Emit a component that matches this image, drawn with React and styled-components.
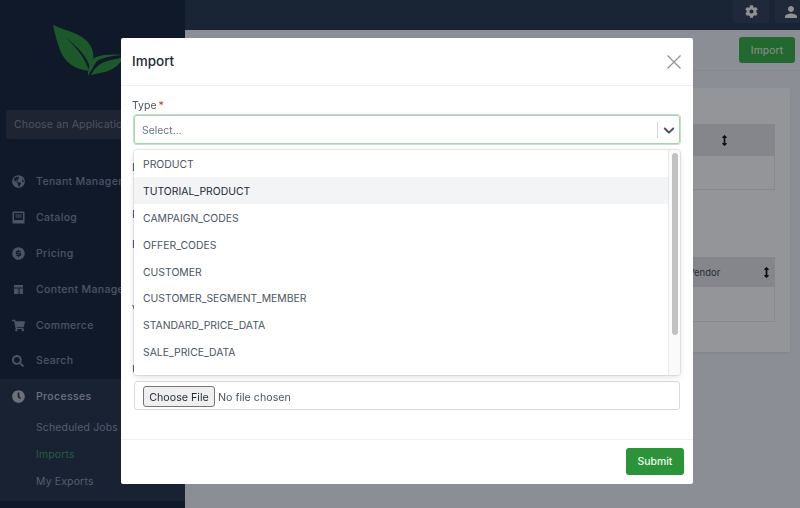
import React from "react";
import styled, { createGlobalStyle } from "styled-components";
import { FaGlobeAmericas, FaShoppingCart, FaSearch, FaClock, FaCog, FaArrowsAltV } from "react-icons/fa";
import { RiMoneyDollarCircleFill } from "react-icons/ri";
import { MdPerson } from "react-icons/md";

const GlobalStyle = createGlobalStyle`
  html, body {
    margin: 0;
    height: 100%;
    overflow: hidden;
    font-family: Inter, "Liberation Sans", sans-serif;
  }
  * { box-sizing: border-box; }
`;

const navItems = [
  { label: "Tenant Management", icon: <FaGlobeAmericas size={13} /> },
  { label: "Catalog", icon: <CatalogIcon /> },
  { label: "Pricing", icon: <RiMoneyDollarCircleFill size={15} /> },
  { label: "Content Management", icon: <ContentIcon /> },
  { label: "Commerce", icon: <FaShoppingCart size={13} /> },
  { label: "Search", icon: <FaSearch size={12} /> },
];

const importTypes = [
  "PRODUCT",
  "TUTORIAL_PRODUCT",
  "CAMPAIGN_CODES",
  "OFFER_CODES",
  "CUSTOMER",
  "CUSTOMER_SEGMENT_MEMBER",
  "STANDARD_PRICE_DATA",
  "SALE_PRICE_DATA",
];

function CatalogIcon() {
  return (
    <svg width="13" height="13" viewBox="0 0 13 13" fill="currentColor">
      <path d="M1 0.5h11a.5.5 0 0 1 .5.5v11.5H.5V1A.5.5 0 0 1 1 .5zM2 2v7h9V2H2zm1.5 1.5h6v1h-6v-1zm0 2h6v1h-6v-1z" fillRule="evenodd" />
    </svg>
  );
}

function ContentIcon() {
  return (
    <svg width="11" height="11" viewBox="0 0 11 11" fill="currentColor">
      <path d="M1 1h9v2.4H1zM1 4.6h4.6V10H1zM6.6 4.6H10V10H6.6z" />
    </svg>
  );
}

function LeafLogo() {
  return (
    <svg width="72" height="54" viewBox="0 0 72 54" fill="#2f9347">
      <path d="M0 0C12 6 30 8 37 20C42 28 41 38 38 46C36 36 30 26 12 12C26 24 33 36 36 46C22 44 12 38 7 25C4 17 2 9 0 0Z" />
      <path d="M35 51C35 44 37 35 43 32C50 29 62 29 72 30C64 30 50 32 44 36C41 40 38 46 35 51Z" />
      <path d="M38 50C42 42 48 37 58 35C63 34 68 33 72 31C68 38 62 44 52 47C47 48 42 49 38 50Z" />
    </svg>
  );
}

function ChevronIcon() {
  return (
    <svg width="18" height="18" viewBox="0 0 20 20" fill="currentColor">
      <path d="M4.516 7.548c0.436-0.446 1.043-0.481 1.576 0l3.908 3.747 3.908-3.747c0.533-0.481 1.141-0.446 1.574 0 0.436 0.445 0.408 1.197 0 1.615-0.406 0.418-4.695 4.502-4.695 4.502-0.217 0.223-0.502 0.335-0.787 0.335s-0.57-0.112-0.789-0.335c0 0-4.287-4.084-4.695-4.502s-0.436-1.17 0-1.615z" />
    </svg>
  );
}

export default function App() {
  return (
    <>
      <GlobalStyle />
      <Shell>
        <Sidebar>
          <LogoWrap>
            <LeafLogo />
          </LogoWrap>
          <AppSelect>Choose an Application</AppSelect>
          <Nav>
            {navItems.map((item) => (
              <NavItem key={item.label}>
                <NavIcon>{item.icon}</NavIcon>
                {item.label}
              </NavItem>
            ))}
            <NavGroup>
              <NavItem $open>
                <NavIcon>
                  <FaClock size={13} />
                </NavIcon>
                Processes
              </NavItem>
              <SubList>
                <SubItem>Scheduled Jobs</SubItem>
                <SubItem $active>Imports</SubItem>
                <SubItem>My Exports</SubItem>
              </SubList>
            </NavGroup>
          </Nav>
        </Sidebar>

        <Main>
          <Topbar>
            <TopButton>
              <FaCog size={13} />
            </TopButton>
            <TopButton>
              <MdPerson size={20} />
            </TopButton>
          </Topbar>
          <SubBar>
            <PageButton>Import</PageButton>
          </SubBar>
          <Content>
            <Card>
              <TableHead $height={32}>
                <FaArrowsAltV size={11} />
              </TableHead>
              <TableBody $height={34} />
              <SecondHead $height={30}>
                <VendorCell>Vendor</VendorCell>
                <FaArrowsAltV size={11} />
              </SecondHead>
              <TableBody $height={35} />
            </Card>
          </Content>
        </Main>
      </Shell>

      <Overlay />
      <Modal>
        <ModalHeader>
          <ModalTitle>Import</ModalTitle>
          <CloseButton aria-label="Close">
            <svg width="14" height="14" viewBox="0 0 14 14" stroke="currentColor" strokeWidth="1.1" fill="none">
              <path d="M.5.5l13 13M13.5.5l-13 13" />
            </svg>
          </CloseButton>
        </ModalHeader>

        <ModalBody>
          <FieldLabel $after={2}>
            Type<Required>*</Required>
          </FieldLabel>
          <SelectBox>
            <Placeholder>Select...</Placeholder>
            <SelectDivider />
            <SelectArrow>
              <ChevronIcon />
            </SelectArrow>
          </SelectBox>

          <HiddenFields>
            <FieldLabel $after={33}>Locale</FieldLabel>
            <FieldLabel $after={16}>Label</FieldLabel>
            <FieldLabel $after={51}>Batch</FieldLabel>
            <FieldLabel $after={46}>Version</FieldLabel>
            <FieldLabel $after={4}>Upload File</FieldLabel>
          </HiddenFields>

          <FileInput type="file" />

          <Menu>
            {importTypes.map((type, i) => (
              <Option key={type} $focused={i === 1}>
                {type}
              </Option>
            ))}
            <ScrollTrack>
              <ScrollThumb />
            </ScrollTrack>
          </Menu>
        </ModalBody>

        <ModalFooter>
          <SubmitButton>Submit</SubmitButton>
        </ModalFooter>
      </Modal>
    </>
  );
}

const Shell = styled.div`
  display: flex;
  width: 800px;
  height: 508px;
  overflow: hidden;
`;

const Sidebar = styled.aside`
  flex: 0 0 185px;
  display: flex;
  flex-direction: column;
  background: #1c2b46;
`;

const LogoWrap = styled.div`
  height: 110px;
  padding: 25px 0 0 53px;
`;

const AppSelect = styled.div`
  margin: 0 6px;
  height: 29px;
  padding: 0 8px;
  display: flex;
  align-items: center;
  white-space: nowrap;
  overflow: hidden;
  border-radius: 3px;
  background: #323d54;
  color: #7f8ca5;
  font-size: 10.6px;
  letter-spacing: 0.1px;
`;

const Nav = styled.nav`
  margin-top: 25px;
  display: flex;
  flex-direction: column;
`;

const NavItem = styled.div`
  height: 35.8px;
  display: flex;
  align-items: center;
  white-space: nowrap;
  font-size: 10.5px;
  font-weight: 500;
  letter-spacing: 0.35px;
  color: ${(p) => (p.$open ? "#b4bccb" : "#7f8ca5")};
`;

const NavIcon = styled.span`
  flex: 0 0 36px;
  display: flex;
  justify-content: center;
`;

const NavGroup = styled.div`
  height: 122px;
  background: #283955;
`;

const SubList = styled.div`
  margin-top: -1px;
`;

const SubItem = styled.div`
  height: 27px;
  padding-left: 36px;
  display: flex;
  align-items: center;
  font-size: 10.4px;
  letter-spacing: 0.2px;
  color: ${(p) => (p.$active ? "#46996a" : "#8f9bb1")};
`;

const Main = styled.main`
  flex: 1;
  min-width: 0;
  display: flex;
  flex-direction: column;
  background: #e8edf8;
`;

const Topbar = styled.header`
  height: 30px;
  display: flex;
  justify-content: flex-end;
  gap: 6px;
  background: #2b3c58;
`;

const TopButton = styled.button`
  width: 36px;
  height: 23px;
  padding: 0;
  display: flex;
  align-items: center;
  justify-content: center;
  border: 0;
  border-radius: 0 0 3px 3px;
  background: #344562;
  color: #f0f2f5;
  &:last-child {
    width: 25px;
    justify-content: flex-start;
    padding-left: 7px;
    overflow: hidden;
  }
`;

const SubBar = styled.div`
  height: 41px;
  padding: 7px 5px 0 0;
  display: flex;
  justify-content: flex-end;
  border-bottom: 1px solid #dde2ec;
`;

const PageButton = styled.button`
  width: 56px;
  height: 26px;
  border: 0;
  border-radius: 3px;
  background: #3aaf50;
  color: #e4eee6;
  font-family: inherit;
  font-size: 10.2px;
  letter-spacing: 0.2px;
`;

const Content = styled.div`
  flex: 1;
  padding: 17px 10px 0 0;
`;

const Card = styled.section`
  height: 264px;
  padding: 36px 15px 0 0;
  background: #f5f9ff;
  box-shadow: 0 1px 2px rgba(0, 0, 0, 0.08);
`;

const TableHead = styled.div`
  height: ${(p) => p.$height}px;
  padding-left: 534px;
  display: flex;
  align-items: center;
  background: #dce0e8;
  color: #141a26;
`;

const SecondHead = styled(TableHead)`
  margin-top: 67px;
  padding-left: 0;
  justify-content: flex-end;
  padding-right: 3px;
`;

const VendorCell = styled.span`
  margin-right: auto;
  padding-left: 503px;
  font-size: 9.5px;
  color: #444a57;
`;

const TableBody = styled.div`
  height: ${(p) => p.$height}px;
  border: 1px solid #e0e4ec;
  border-top: 0;
`;

const Overlay = styled.div`
  position: fixed;
  inset: 0;
  background: rgba(0, 0, 0, 0.4);
`;

const Modal = styled.div`
  position: fixed;
  left: 121px;
  top: 38px;
  width: 572px;
  height: 446px;
  display: flex;
  flex-direction: column;
  background: #fff;
  border-radius: 2px;
`;

const ModalHeader = styled.div`
  height: 48px;
  padding: 0 12px 0 11px;
  display: flex;
  align-items: center;
  justify-content: space-between;
  border-bottom: 1px solid #eef0f2;
`;

const ModalTitle = styled.h2`
  margin: -2px 0 0;
  font-size: 13.5px;
  font-weight: 500;
  color: #1f2937;
`;

const CloseButton = styled.button`
  padding: 0;
  display: flex;
  border: 0;
  background: none;
  color: #8b8f96;
`;

const ModalBody = styled.div`
  position: relative;
  flex: 1;
  padding: 13px 13px 0 11px;
`;

const FieldLabel = styled.label`
  display: block;
  height: 14px;
  margin-bottom: ${(p) => p.$after}px;
  font-size: 10.5px;
  line-height: 14px;
  white-space: nowrap;
  color: #4b5563;
`;

const Required = styled.span`
  margin-left: 2px;
  color: #dc2626;
`;

const SelectBox = styled.div`
  height: 29px;
  margin-left: 2px;
  display: flex;
  align-items: center;
  border: 1px solid #a7d3ae;
  border-radius: 3px;
  box-shadow: 0 0 0 1px #c3e0c8;
`;

const Placeholder = styled.span`
  flex: 1;
  padding: 1px 0 0 7px;
  font-size: 10.4px;
  color: #6b7280;
`;

const SelectDivider = styled.span`
  width: 1px;
  height: 16px;
  background: #d1d5db;
`;

const SelectArrow = styled.span`
  width: 21px;
  display: flex;
  justify-content: center;
  color: #4b5563;
`;

const HiddenFields = styled.div`
  margin-top: 17px;
`;

const FileInput = styled.input`
  display: block;
  width: 546px;
  height: 29px;
  margin-left: 2px;
  padding: 4px 8px;
  border: 1px solid #d6d9de;
  border-radius: 3px;
  font-family: inherit;
  font-size: 10.7px;
  color: #4b5563;
  &::file-selector-button {
    width: 72px;
    height: 21px;
    margin-right: 3px;
    padding: 1px 0 0;
    border: 1px solid #767676;
    border-radius: 3px;
    background: #efefef;
    font-family: inherit;
    font-size: 10.7px;
    color: #1f2937;
  }
`;

const Menu = styled.div`
  position: absolute;
  left: 13px;
  top: 64px;
  width: 546px;
  height: 225px;
  padding-right: 12px;
  overflow: hidden;
  background: #fff;
  border-radius: 3px;
  box-shadow: 0 0 0 1px rgba(0, 0, 0, 0.08), 0 2px 6px rgba(0, 0, 0, 0.12);
`;

const ScrollTrack = styled.div`
  position: absolute;
  top: 0;
  right: 0;
  bottom: 0;
  width: 12px;
  background: #fafafa;
  border-left: 1px solid #e8e8e8;
`;

const ScrollThumb = styled.div`
  width: 6px;
  height: 182px;
  margin: 3px 0 0 3px;
  border-radius: 3px;
  background: #c1c1c1;
`;

const Option = styled.div`
  height: 26.9px;
  padding: 2px 0 0 9px;
  display: flex;
  align-items: center;
  font-size: 10.4px;
  color: ${(p) => (p.$focused ? "#1f2937" : "#4b5563")};
  background: ${(p) => (p.$focused ? "#f3f4f6" : "#fff")};
`;

const ModalFooter = styled.div`
  height: 45px;
  padding: 8px 9px 0 0;
  display: flex;
  justify-content: flex-end;
  border-top: 1px solid #eef0f2;
`;

const SubmitButton = styled.button`
  width: 58px;
  height: 27px;
  border: 0;
  border-radius: 3px;
  background: #2b9439;
  color: #f3f8f3;
  font-family: inherit;
  font-size: 10.4px;
  font-weight: 500;
`;
